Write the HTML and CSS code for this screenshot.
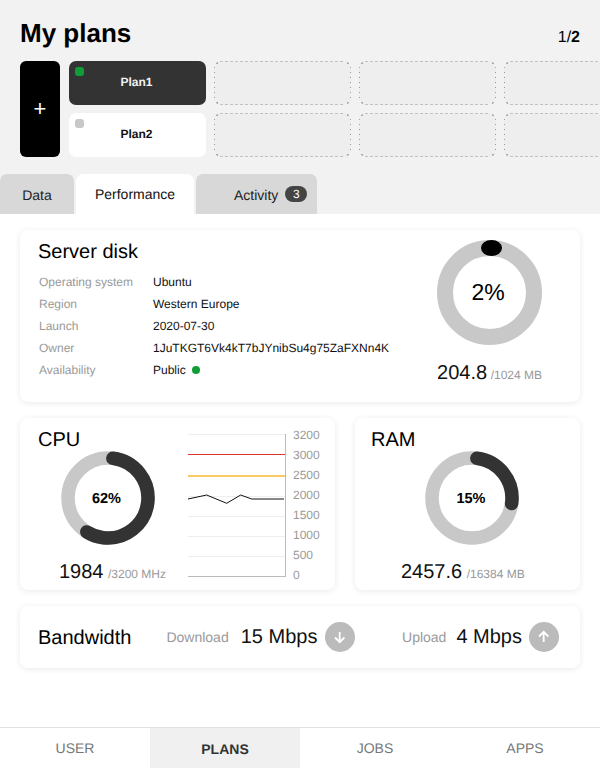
FILE: index.html
```html
<!DOCTYPE html>
<html lang="en">
<head>
<meta charset="utf-8">
<title>My plans</title>
<link rel="stylesheet" href="styles.css">
</head>
<body>
<div class="app">
  <header class="top">
    <div class="title-row">
      <h1 class="page-title">My plans</h1>
      <div class="pager">1/<b>2</b></div>
    </div>
    <div class="plans">
      <button class="add">+</button>
      <div class="plan plan-active"><span class="led led-on"></span>Plan1</div>
      <div class="slot"></div>
      <div class="slot"></div>
      <div class="slot"></div>
      <div class="plan plan-idle"><span class="led led-off"></span>Plan2</div>
      <div class="slot"></div>
      <div class="slot"></div>
      <div class="slot"></div>
    </div>
    <nav class="tabs">
      <div class="tab tab-data">Data</div>
      <div class="tab tab-current">Performance</div>
      <div class="tab tab-activity">Activity <span class="count">3</span></div>
    </nav>
  </header>

  <main class="content">
    <section class="card disk">
      <div class="disk-info">
        <h2 class="card-title">Server disk</h2>
        <dl class="specs">
          <dt>Operating system</dt><dd>Ubuntu</dd>
          <dt>Region</dt><dd>Western Europe</dd>
          <dt>Launch</dt><dd>2020-07-30</dd>
          <dt>Owner</dt><dd>1JuTKGT6Vk4kT7bJYnibSu4g75ZaFXNn4K</dd>
          <dt>Availability</dt><dd>Public <span class="public-dot"></span></dd>
        </dl>
      </div>
      <div class="disk-usage">
        <div class="donut donut-disk">
          <svg width="105" height="105" viewBox="0 0 105 105">
            <circle cx="52.5" cy="52.5" r="44.5" fill="none" stroke="#c8c8c8" stroke-width="16"/>
            <ellipse cx="54.5" cy="8" rx="10.5" ry="8" fill="#000"/>
          </svg>
          <span class="donut-label donut-label-big">2%</span>
        </div>
        <div class="usage"><span class="usage-num">204.8</span> <span class="usage-max">/1024 MB</span></div>
      </div>
    </section>

    <div class="pair">
      <section class="card cpu">
        <div class="cpu-left">
          <h2 class="card-title">CPU</h2>
          <div class="donut">
            <svg width="94" height="94" viewBox="0 0 94 94">
              <circle cx="47" cy="47" r="40" fill="none" stroke="#c8c8c8" stroke-width="13.5"/>
              <circle cx="47" cy="47" r="40" fill="none" stroke="#333" stroke-width="13.5" stroke-linecap="round" pathLength="360" stroke-dasharray="205 360" transform="rotate(-83 47 47)"/>
            </svg>
            <span class="donut-label">62%</span>
          </div>
          <div class="usage usage-cpu"><span class="usage-num">1984</span> <span class="usage-max">/3200 MHz</span></div>
        </div>
        <div class="chart">
          <svg width="98" height="144" viewBox="0 0 98 144">
            <g stroke="#eee" stroke-width="1">
              <line x1="0" x2="97" y1="0.5" y2="0.5"/>
              <line x1="0" x2="97" y1="62.5" y2="62.5"/>
              <line x1="0" x2="97" y1="82.5" y2="82.5"/>
              <line x1="0" x2="97" y1="102.5" y2="102.5"/>
              <line x1="0" x2="97" y1="122.5" y2="122.5"/>
            </g>
            <line x1="0" x2="97" y1="20.5" y2="20.5" stroke="#e0332b"/>
            <line x1="0" x2="97" y1="42" y2="42" stroke="#f7b733" stroke-width="1.4"/>
            <polyline points="0,65 18.7,61 38.7,69.3 52.7,61 63.7,65 96,65" fill="none" stroke="#111" stroke-width="1"/>
            <line x1="97.5" x2="97.5" y1="0" y2="143" stroke="#bbb"/>
            <line x1="0" x2="98" y1="142.5" y2="142.5" stroke="#bbb"/>
          </svg>
          <div class="axis">
            <span>3200</span><span>3000</span><span>2500</span><span>2000</span><span>1500</span><span>1000</span><span>500</span><span>0</span>
          </div>
        </div>
      </section>

      <section class="card ram">
        <h2 class="card-title">RAM</h2>
        <div class="donut">
          <svg width="94" height="94" viewBox="0 0 94 94">
            <circle cx="47" cy="47" r="40" fill="none" stroke="#c8c8c8" stroke-width="13.5"/>
            <circle cx="47" cy="47" r="40" fill="none" stroke="#333" stroke-width="13.5" stroke-linecap="round" pathLength="360" stroke-dasharray="91 360" transform="rotate(-83 47 47)"/>
          </svg>
          <span class="donut-label">15%</span>
        </div>
        <div class="usage usage-ram"><span class="usage-num">2457.6</span> <span class="usage-max">/16384 MB</span></div>
      </section>
    </div>

    <section class="card band">
      <h2 class="card-title">Bandwidth</h2>
      <div class="band-item band-down">
        <span class="band-label">Download</span>
        <span class="band-value">15 Mbps</span>
        <span class="band-icon">
          <svg width="14" height="14" viewBox="0 0 14 14"><path d="M6.7 2V12M2 7.5 6.7 12.2 11.4 7.5" fill="none" stroke="#fff" stroke-width="1.8"/></svg>
        </span>
      </div>
      <div class="band-item band-up">
        <span class="band-label">Upload</span>
        <span class="band-value">4 Mbps</span>
        <span class="band-icon">
          <svg width="14" height="14" viewBox="0 0 14 14"><path d="M6.7 12V2M2 6.5 6.7 1.8 11.4 6.5" fill="none" stroke="#fff" stroke-width="1.8"/></svg>
        </span>
      </div>
    </section>
  </main>

  <nav class="bottom">
    <div class="bottom-item">USER</div>
    <div class="bottom-item bottom-current">PLANS</div>
    <div class="bottom-item">JOBS</div>
    <div class="bottom-item">APPS</div>
  </nav>
</div>
</body>
</html>
```
FILE: styles.css
```css
* { box-sizing: border-box; }
html, body { margin: 0; height: 100%; }
body { font-family: "Liberation Sans", Arial, sans-serif; color: #000; background: #fff; overflow: hidden; text-rendering: geometricPrecision; }
.app { width: 600px; height: 768px; display: flex; flex-direction: column; overflow: hidden; }

.top { background: #f2f2f2; height: 214px; padding-top: 18px; flex: none; display: flex; flex-direction: column; }
.title-row { display: flex; justify-content: space-between; align-items: flex-end; padding: 0 20px; height: 30px; }
.page-title { margin: 0; font-size: 26px; line-height: 30px; font-weight: 700; }
.pager { font-size: 16px; line-height: 18px; padding-bottom: 1px; }
.plans { display: grid; grid-template-columns: 41px repeat(4, 137px); grid-template-rows: 44px 44px; column-gap: 8px; row-gap: 8px; margin-top: 13px; padding-left: 20px; width: 800px; flex: none; }
.add { grid-row: 1 / 3; background: #000; color: #fff; border: 0; border-radius: 6px; font: 400 22px "Liberation Sans", Arial, sans-serif; padding: 0; width: 40px; }
.plan { position: relative; border-radius: 7px; display: flex; align-items: center; justify-content: center; font-size: 12px; font-weight: 700; padding: 0 2px 2px 0; }
.plan-active { background: #333; color: #f2f2f2; }
.plan-idle { background: #fff; color: #111; }
.led { position: absolute; left: 6px; top: 6px; width: 9px; height: 9px; border-radius: 3px; }
.led-on { background: #0f9d38; }
.led-off { background: #c8c8c8; }
.slot {
  border-radius: 7px;
  background-color: #eee;
  background-repeat: no-repeat;
  background-image:
    radial-gradient(circle, #aaa 0 .8px, transparent 1px),
    radial-gradient(circle, #aaa 0 .8px, transparent 1px),
    radial-gradient(circle, #aaa 0 .8px, transparent 1px),
    radial-gradient(circle, #aaa 0 .8px, transparent 1px),
    repeating-linear-gradient(90deg, #c2c2c2 0 3px, transparent 3px 5px),
    repeating-linear-gradient(90deg, #c2c2c2 0 3px, transparent 3px 5px),
    repeating-linear-gradient(180deg, #999 0 1px, transparent 1px 5px),
    repeating-linear-gradient(180deg, #999 0 1px, transparent 1px 5px);
  background-size:
    2px 2px, 2px 2px, 2px 2px, 2px 2px,
    125px 1px, 125px 1px, 1px 32px, 1px 32px;
  background-position:
    2px 1px, 133px 1px, 2px 41px, 133px 41px,
    6px 0, 6px 43px, 0 6px, 136px 6px;
}
.tabs { display: flex; gap: 2px; margin-top: 17px; height: 40px; }
.tab { background: #d8d8d8; border-radius: 7px 7px 0 0; display: flex; align-items: center; font-size: 14px; color: #222; }
.tab-data { width: 74px; justify-content: center; padding-top: 2px; }
.tab-current { width: 118px; background: #fff; justify-content: center; color: #111; }
.tab-activity { width: 121px; padding-left: 38px; padding-top: 2px; gap: 7px; }
.count { background: #444; color: #fff; font-size: 12px; border-radius: 8px; width: 22px; height: 16px; display: flex; align-items: center; justify-content: center; margin-top: -3px; }

.content { flex: 1; padding: 16px 20px 0; display: flex; flex-direction: column; gap: 16px; }
.card { background: #fff; border-radius: 8px; box-shadow: 0 1px 6px rgba(0,0,0,.09); }
.card-title { margin: 0 0 -1px; padding-top: 1px; font-size: 20px; line-height: 24px; font-weight: 400; color: #000; }

.disk { height: 172px; display: flex; justify-content: space-between; padding: 9px 38px 0 18px; }
.specs { margin: 8px 0 0 1px; display: grid; grid-template-columns: 114px auto; grid-auto-rows: 22px; font-size: 12px; align-items: center; }
.specs dt { color: #999; }
.specs dd { margin: 0; color: #111; }
.public-dot { display: inline-block; width: 8px; height: 8px; border-radius: 50%; background: #0f9d38; margin-left: 3px; }
.disk-usage { display: flex; flex-direction: column; align-items: center; }
.donut { display: grid; place-items: center; }
.donut > * { grid-area: 1 / 1; }
.donut svg { display: block; }
.donut-label { font-size: 14.5px; font-weight: 700; padding: 2px 2px 0 0; }
.donut-label-big { font-size: 23px; font-weight: 400; padding: 0 2px 0 0; }
.donut-disk { margin-top: 1px; }
.usage { white-space: nowrap; }
.usage-num { font-size: 20px; color: #111; }
.usage-max { font-size: 12px; color: #999; }
.disk-usage .usage { margin-top: 17px; padding-left: 1px; }
.disk-usage .usage-num { margin-right: -1px; }

.pair { display: flex; justify-content: space-between; }
.cpu { width: 315px; height: 172px; display: flex; padding: 9px 0 0 18px; }
.cpu-left { width: 150px; display: flex; flex-direction: column; }
.cpu-left .donut { align-self: flex-start; margin: 0 0 0 22.5px; }
.usage-cpu { margin: 16px 0 0 21px; }
.chart { display: flex; gap: 7px; margin-top: 7px; height: 144px; }
.chart svg { display: block; }
.axis { display: flex; flex-direction: column; justify-content: space-between; font-size: 12px; line-height: 14px; color: #999; height: 154px; margin-top: -6px; }
.ram { width: 225px; height: 172px; padding: 9px 0 0 16px; display: flex; flex-direction: column; }
.ram .donut { align-self: flex-start; margin-left: 54px; }
.usage-ram { margin: 16px 0 0 30px; }

.band { height: 62px; display: flex; align-items: center; padding: 0 21px 0 18px; }
.band-item { display: flex; align-items: center; }
.band-down { margin-left: 35px; }
.band-up { margin-left: auto; }
.band-label { font-size: 14px; color: #999; }
.band-value { font-size: 20px; color: #111; margin-left: 10px; padding-top: 1px; }
.band-down .band-value { margin-left: 12px; }
.band-icon { width: 30px; height: 30px; border-radius: 50%; background: #bbb; display: flex; align-items: center; justify-content: center; margin-left: 7px; }
.band-down .band-icon { margin-left: 8px; }
.band-icon svg { display: block; }

.bottom { height: 41px; flex: none; display: grid; grid-template-columns: repeat(4, 150px); border-top: 1px solid #e2e2e2; }
.bottom-item { display: flex; align-items: center; justify-content: center; font-size: 14px; color: #777; padding-bottom: 1px; }
.bottom-current { background: #f0f0f0; color: #333; font-weight: 700; padding: 1px 0 0; }
```
